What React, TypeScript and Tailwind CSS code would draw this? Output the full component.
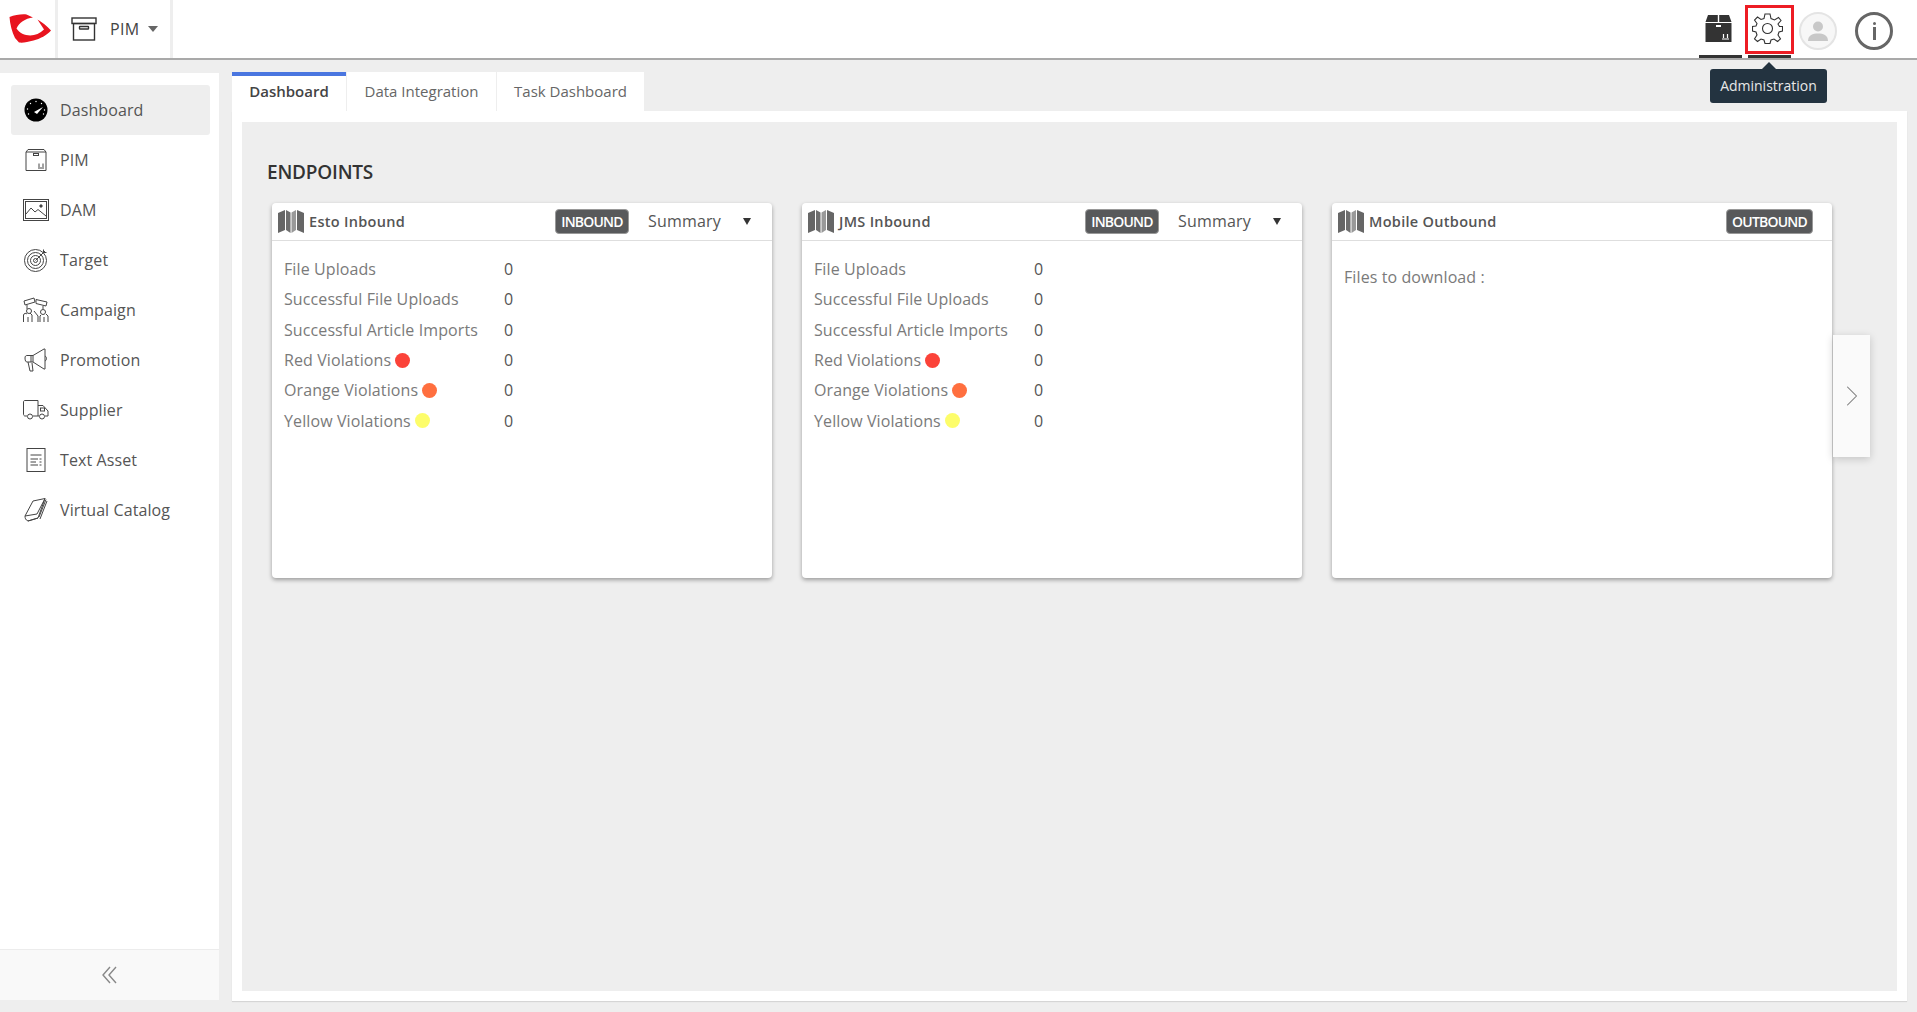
import { ChevronRight } from 'lucide-react'

const font = { fontFamily: '"Open Sans", sans-serif' }

function Logo() {
  return (
    <svg width="43" height="30" viewBox="0 0 43 30" className="shrink-0">
      <path
        d="M0.5 3 C6 1 12 0 17.5 0.5 L24 3.5 C16 4.5 10 9 7.5 14.5 C13 23 27 24 35 15.5 L28.5 5.5 C33 8 38 12 42 16.5 C38 21 31 25 24.5 26.5 C19 28 14 29 10 28.5 L6 24 C3 18 1 10 0.5 3 Z"
        fill="#e8141f"
      />
    </svg>
  )
}

function ArchiveBox() {
  return (
    <svg width="26" height="24" viewBox="0 0 26 24" fill="none" stroke="#333" strokeWidth="1.4">
      <rect x="1" y="1" width="24" height="5.5" />
      <rect x="2.5" y="6.5" width="21" height="16.5" />
      <rect x="8.5" y="9.5" width="9" height="2.5" rx="0.5" />
    </svg>
  )
}

function GaugeIcon() {
  return (
    <svg width="24" height="24" viewBox="0 0 24 24">
      <circle cx="12" cy="12" r="11.5" fill="#000" />
      <path d="M10 14 L19 9 L13 16 Z" fill="#fff" />
      <g fill="#fff">
        <circle cx="12" cy="3.5" r="0.7" />
        <circle cx="6.5" cy="5.5" r="0.7" />
        <circle cx="3.5" cy="11" r="0.7" />
        <circle cx="17.5" cy="5.5" r="0.7" />
        <circle cx="20.5" cy="12" r="0.7" />
        <circle cx="4.5" cy="16" r="0.7" />
        <circle cx="19.5" cy="16" r="0.7" />
      </g>
    </svg>
  )
}

function PimIcon() {
  return (
    <svg width="24" height="24" viewBox="0 0 24 24" fill="none" stroke="#444" strokeWidth="1">
      <path d="M4 1.5 H20 L22 4 V22.5 H2 V4 Z M2 4 H22" />
      <rect x="9.5" y="5.5" width="5" height="2" />
      <path d="M15 19 V15.5 M19 19 V15.5 M14 20 H20" />
    </svg>
  )
}

function DamIcon() {
  return (
    <svg width="26" height="22" viewBox="0 0 26 22" fill="none" stroke="#444" strokeWidth="1">
      <rect x="0.5" y="0.5" width="25" height="21" />
      <rect x="2.5" y="2.5" width="21" height="17" />
      <path d="M3 15 L8 9 L12 13 L15 10.5 L23 17" />
      <circle cx="18" cy="7" r="1.2" fill="#444" />
    </svg>
  )
}

function TargetIcon() {
  return (
    <svg width="24" height="24" viewBox="0 0 24 24" fill="none" stroke="#444" strokeWidth="1">
      <circle cx="11.5" cy="12.5" r="11" />
      <circle cx="11.5" cy="12.5" r="8" />
      <circle cx="11.5" cy="12.5" r="5" />
      <circle cx="11.5" cy="12.5" r="2" />
      <path d="M11.5 12.5 L21 3 M19.5 1.5 L19.5 4.5 L22.5 4.5" />
    </svg>
  )
}

function CampaignIcon() {
  return (
    <svg width="26" height="26" viewBox="0 0 26 26" fill="none" stroke="#444" strokeWidth="1">
      <path d="M1 4 L11 1 L12 5 L2 8 Z M13 2.5 L24 5 L23 9 L13 6.5 Z" />
      <path d="M4 8 V12 M20 9 V12" />
      <circle cx="6" cy="14" r="2.5" />
      <circle cx="20" cy="15" r="2.5" />
      <path d="M0.5 25 V18 C1 16 3 16 4 17 M9 25 V18 L7 16 M11 14 L15 19 V25 M17 25 V19 L18 18 M25 25 V19 L23 17 M5 25 V20 M21 25 V20" />
    </svg>
  )
}

function PromotionIcon() {
  return (
    <svg width="24" height="24" viewBox="0 0 24 24" fill="none" stroke="#444" strokeWidth="1">
      <path d="M1 10 C1 8 2 7.5 3 7.5 H9 L20 1 H21 V21 H20 L9 14 H3 C2 14 1 13 1 10 Z" />
      <path d="M7 7.5 V14 M9 7.5 V14 M21 8 C23 9 23 12 21 13" />
      <path d="M4 14 L6 23 H9 L8 15" />
    </svg>
  )
}

function TruckIcon() {
  return (
    <svg width="26" height="20" viewBox="0 0 26 20" fill="none" stroke="#444" strokeWidth="1">
      <path d="M4 16 H2 C1 16 0.5 15 0.5 14 V2 C0.5 1 1 0.5 2 0.5 H15 V16 H10" />
      <path d="M15 5.5 H20 L25 11 V16 H22 M16 16 H15" />
      <rect x="17.5" y="8" width="4" height="3" />
      <circle cx="7" cy="16.5" r="2.5" />
      <circle cx="19" cy="16.5" r="2.5" />
    </svg>
  )
}

function TextAssetIcon() {
  return (
    <svg width="20" height="24" viewBox="0 0 20 24" fill="none" stroke="#444" strokeWidth="1">
      <rect x="1" y="0.5" width="18" height="23" />
      <path d="M4.5 7 H15.5 M4.5 11 H12 M13.5 11 H15.5 M4.5 14 H10 M13.5 14 H15.5 M4.5 17 H12 M13.5 17 H15.5" />
    </svg>
  )
}

function CatalogIcon() {
  return (
    <svg width="24" height="24" viewBox="0 0 24 24" fill="none" stroke="#444" strokeWidth="1">
      <path d="M1 18 L9 3 L21 0.5 L14 20 L4 23 C1.5 22 1 20 1 18 Z M1 18 L13 16 L21 0.5" />
      <path d="M4 23 L14 20 M23 3 L16 21 M22 1.5 L15 19" />
    </svg>
  )
}

function MapIcon() {
  return (
    <svg width="26" height="23" viewBox="0 0 26 23" className="shrink-0">
      <path d="M0 3 L7 0 V20 L0 23 Z" fill="#666" />
      <path d="M8 0 L12.5 2.5 V23 L8 20 Z" fill="#6f6f6f" />
      <path d="M13.5 2.5 L18 0 V20 L13.5 23 Z" fill="#999" />
      <path d="M19 0 L26 3 V23 L19 20 Z" fill="#666" />
    </svg>
  )
}

function DarkBoxIcon() {
  return (
    <svg width="27" height="27" viewBox="0 0 27 27">
      <path d="M3 0 H12.8 V7 H0.5 Z M14.2 0 H24 L26.5 7 H14.2 Z" fill="#333" />
      <path d="M0.5 8 H26.5 V27 H0.5 Z" fill="#333" />
      <rect x="11" y="10" width="5" height="2" fill="#fff" />
      <path d="M17 24 H24 M18.5 23 V19 M22.5 23 V19" stroke="#fff" strokeWidth="1.2" />
    </svg>
  )
}

function GearIcon() {
  return (
    <svg width="31" height="31" viewBox="0 0 31 31" fill="none" stroke="#333" strokeWidth="1.1">
      <circle cx="15.5" cy="15.5" r="5" />
      <path d="M13 1 H18 L19 5.5 L22.5 7 L26.5 4.5 L29 7.5 L26 11 L27.5 13.5 L30.5 13.5 V18 L27 19 L26 22 L28.5 26 L25.5 28.5 L22 26 L19 27 L18 30.5 H13 L12 27 L9 26 L5.5 28.5 L2.5 26 L5 22 L4 19 L0.5 18 V13.5 L4 13 L5 10.5 L2.5 7 L5.5 4 L9 6.5 L12 5.5 Z" />
    </svg>
  )
}

function AvatarIcon() {
  return (
    <div className="flex h-[38px] w-[38px] items-center justify-center rounded-full border-2 border-[#e4e4e4] bg-[#f7f7f7]">
      <svg width="22" height="22" viewBox="0 0 22 22" fill="#c8c8c8">
        <circle cx="11" cy="6.5" r="5" />
        <path d="M1 21 C1 15 6 13.5 11 13.5 C16 13.5 21 15 21 21 Z" />
      </svg>
    </div>
  )
}

function InfoIcon() {
  return (
    <div className="flex h-[38px] w-[38px] flex-col items-center justify-center gap-[2px] rounded-full border-[3px] border-[#666]">
      <div className="h-[3px] w-[3px] rounded-full bg-[#666]" />
      <div className="h-[13px] w-[3px] bg-[#666]" />
    </div>
  )
}

const navItems = [
  { label: 'Dashboard', icon: <GaugeIcon />, active: true },
  { label: 'PIM', icon: <PimIcon /> },
  { label: 'DAM', icon: <DamIcon /> },
  { label: 'Target', icon: <TargetIcon /> },
  { label: 'Campaign', icon: <CampaignIcon /> },
  { label: 'Promotion', icon: <PromotionIcon /> },
  { label: 'Supplier', icon: <TruckIcon /> },
  { label: 'Text Asset', icon: <TextAssetIcon /> },
  { label: 'Virtual Catalog', icon: <CatalogIcon /> },
]

const rows = [
  { label: 'File Uploads' },
  { label: 'Successful File Uploads' },
  { label: 'Successful Article Imports' },
  { label: 'Red Violations', dot: 'bg-[#fb4339]' },
  { label: 'Orange Violations', dot: 'bg-[#ff6f3f]' },
  { label: 'Yellow Violations', dot: 'bg-[#fdfd6a]' },
]

function Badge({ text, width }: { text: string; width: string }) {
  return (
    <span
      className={`flex h-[25px] items-center justify-center rounded-[4px] border border-[#999] bg-[#58595b] text-[14px] font-semibold tracking-[-0.8px] text-white ${width}`}
    >
      {text}
    </span>
  )
}

function CardHeader({ title, children }: { title: string; children: React.ReactNode }) {
  return (
    <div className="flex h-[38px] items-center border-b border-[#dedede] pl-[6px]">
      <MapIcon />
      <span className="ml-[5px] text-[14.5px] font-semibold tracking-[0.3px] text-[#555]">{title}</span>
      {children}
    </div>
  )
}

function InboundCard({ title }: { title: string }) {
  return (
    <div className="h-[375px] w-[500px] shrink-0 rounded-[4px] bg-white shadow-[0_2px_4px_rgba(0,0,0,0.35)]">
      <CardHeader title={title}>
        <div className="ml-auto flex items-center">
          <Badge text="INBOUND" width="w-[74px]" />
          <span className="ml-[19px] w-[95px] pb-[2px] text-[16px] tracking-[0.2px] text-[#555]">Summary</span>
          <span className="mr-[21px] h-0 w-0 border-x-[4px] border-t-[7px] border-x-transparent border-t-[#333]" />
        </div>
      </CardHeader>
      <div className="flex flex-col pl-[12px] pt-[13px]">
        {rows.map((row) => (
          <div key={row.label} className="flex h-[30.3px] items-center text-[16px] tracking-[0.1px] text-[#7a7a7a]">
            <div className="flex w-[220px] items-center gap-[4px]">
              <span>{row.label}</span>
              {row.dot ? <span className={`h-[15px] w-[15px] rounded-full ${row.dot}`} /> : null}
            </div>
            <span className="text-[#555]">0</span>
          </div>
        ))}
      </div>
    </div>
  )
}

function OutboundCard() {
  return (
    <div className="h-[375px] w-[500px] shrink-0 rounded-[4px] bg-white shadow-[0_2px_4px_rgba(0,0,0,0.35)]">
      <CardHeader title="Mobile Outbound">
        <div className="ml-auto mr-[19px]">
          <Badge text="OUTBOUND" width="w-[87px]" />
        </div>
      </CardHeader>
      <p className="pl-[12px] pt-[24px] text-[16px] tracking-[0.1px] text-[#7a7a7a]">Files to download :</p>
    </div>
  )
}

export default function App() {
  return (
    <div className="flex h-[1012px] w-[1917px] flex-col overflow-hidden bg-[#eeeeee]" style={font}>
      {/* top bar */}
      <header className="flex h-[60px] shrink-0 items-stretch border-b-2 border-[#a9a9a9] bg-white">
        <div className="flex w-[55px] items-center pl-[9px]">
          <Logo />
        </div>
        <div className="flex w-[118px] items-center border-x-[3px] border-[#eeeeee] pl-[13px]">
          <ArchiveBox />
          <span className="ml-[13px] text-[16px] tracking-[0.3px] text-[#444]">PIM</span>
          <span className="ml-[9px] h-0 w-0 border-x-[5px] border-t-[6px] border-x-transparent border-t-[#666]" />
        </div>
        <div className="ml-auto flex items-stretch">
          <div className="flex w-[43px] flex-col items-center border-b-[3px] border-[#333] pr-[4px] pt-[15px]">
            <DarkBoxIcon />
          </div>
          <div className="relative ml-[6px] flex w-[43px] flex-col items-center border-b-[3px] border-[#333] pr-[4px] pt-[13px]">
            <GearIcon />
            <div className="absolute left-[-3px] top-[5px] h-[49px] w-[49px] border-[3px] border-[#ed1c24]" />
          </div>
          <div className="ml-[8px] pt-[12px]">
            <AvatarIcon />
          </div>
          <div className="ml-[18px] mr-[24px] pt-[12px]">
            <InfoIcon />
          </div>
        </div>
      </header>

      <div className="relative flex min-h-0 flex-1">
        {/* sidebar */}
        <aside className="mb-[12px] mt-[13px] flex w-[219px] shrink-0 flex-col bg-white">
          <nav className="flex-1 pl-[11px] pr-[9px] pt-[12px]">
            {navItems.map((item) => (
              <div
                key={item.label}
                className={`flex h-[50px] items-center rounded-[3px] ${item.active ? 'bg-[#eeeeee]' : ''}`}
              >
                <div className="flex w-[49px] shrink-0 items-center justify-center">{item.icon}</div>
                <span className="text-[16px] tracking-[0.1px] text-[#555]">{item.label}</span>
              </div>
            ))}
          </nav>
          <div className="flex h-[51px] items-center justify-center border-t border-[#ececec] bg-[#f9f9f9] pr-[1px]">
            <svg width="15" height="18" viewBox="0 0 15 18" fill="none" stroke="#888" strokeWidth="1.4">
              <path d="M8 1 L1 9 L8 17 M14 1 L7 9 L14 17" />
            </svg>
          </div>
        </aside>

        {/* main */}
        <main className="mb-[11px] ml-[13px] mr-[10px] mt-[12px] flex min-w-0 flex-1 flex-col">
          <div className="flex h-[39px] shrink-0 items-stretch text-[15px]">
            <div className="flex w-[114px] items-center justify-center border-t-4 border-[#4a76e0] bg-white pb-[4px] font-semibold text-[#444]">
              Dashboard
            </div>
            <div className="flex w-[151px] items-center justify-center border-x border-[#eeeeee] bg-white text-[#666]">
              Data Integration
            </div>
            <div className="flex w-[147px] items-center justify-center bg-white text-[#666]">Task Dashboard</div>
          </div>
          <div className="flex min-h-0 flex-1 flex-col bg-white px-[10px] pb-[10px] pt-[11px] shadow-[0_1px_1px_rgba(0,0,0,0.1)]">
            <div className="relative flex-1 bg-[#eeeeee] pl-[25px] pt-[36px]">
              <h2 className="h-[45px] text-[19px] font-semibold leading-[28px] tracking-[-0.2px] text-[#333]">ENDPOINTS</h2>
              <div className="flex gap-[30px] pl-[5px]">
                <InboundCard title="Esto Inbound" />
                <InboundCard title="JMS Inbound" />
                <OutboundCard />
              </div>
              {/* carousel arrow */}
              <div className="absolute left-[1591px] top-[213px] flex h-[122px] w-[37px] items-center justify-center bg-[#fafafa] shadow-[0_2px_8px_rgba(0,0,0,0.18)]">
                <ChevronRight size={36} strokeWidth={0.7} className="text-[#777]" />
              </div>
            </div>
          </div>
        </main>

        {/* tooltip */}
        <div className="absolute left-[1710px] top-[9px] flex h-[34px] w-[117px] items-center justify-center rounded-[3px] bg-[#233340] pb-[1px] text-[14px] text-[#e8e8e8]">
          <span className="absolute left-[52px] top-[-7px] h-0 w-0 border-x-[7px] border-b-[7px] border-x-transparent border-b-[#233340]" />
          Administration
        </div>
      </div>
    </div>
  )
}
